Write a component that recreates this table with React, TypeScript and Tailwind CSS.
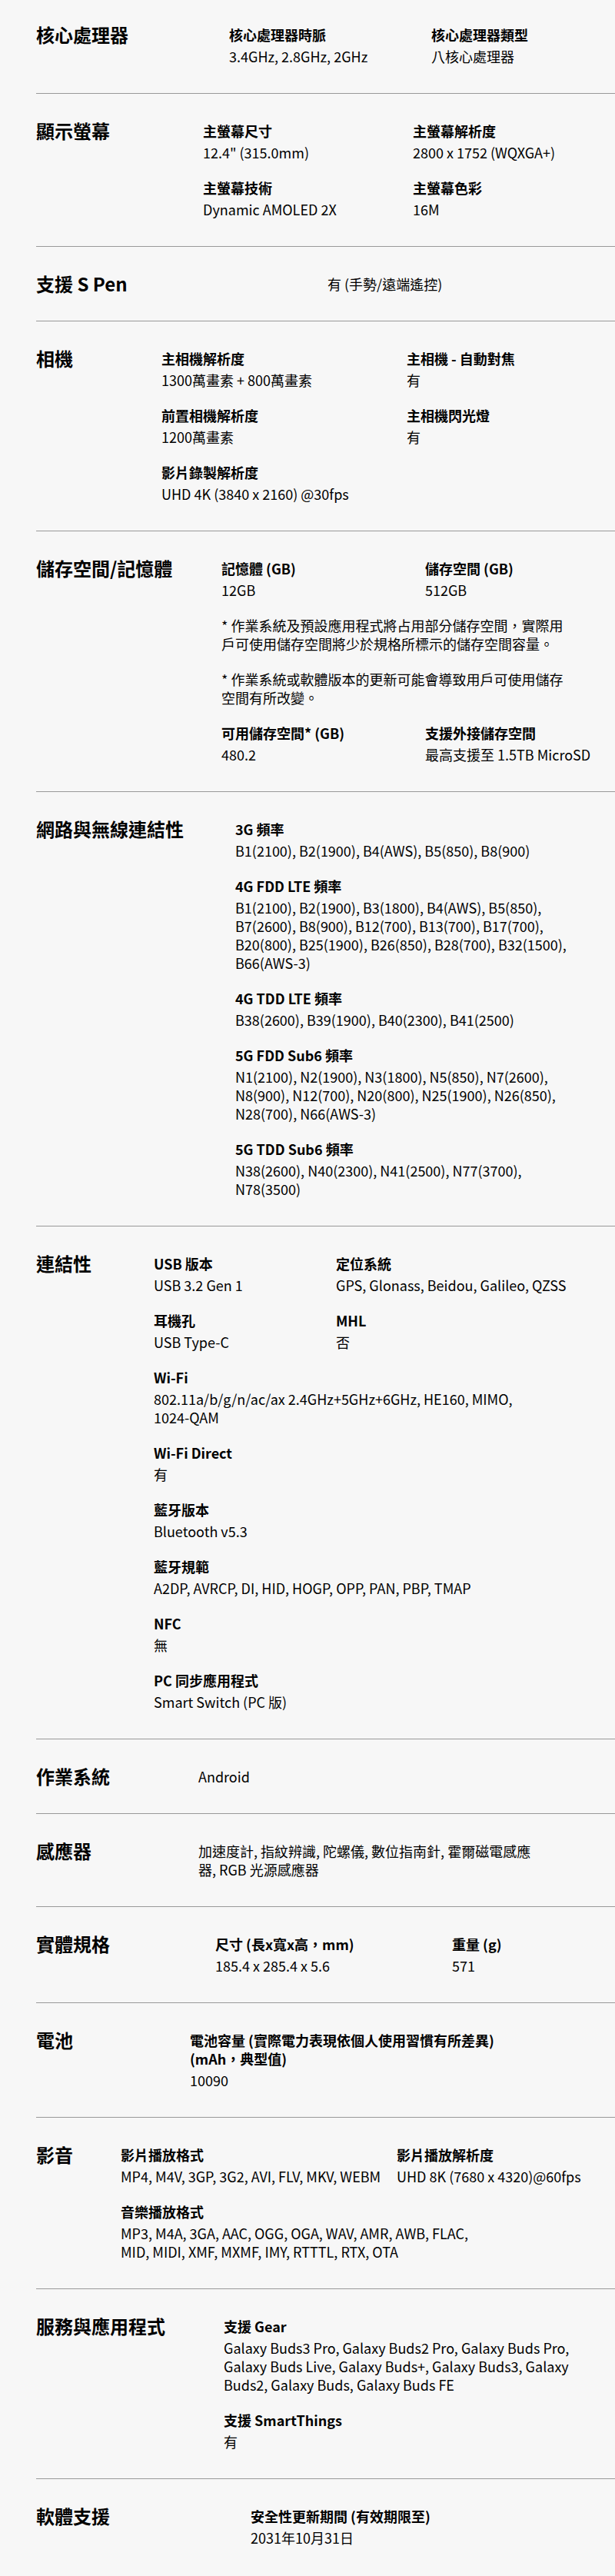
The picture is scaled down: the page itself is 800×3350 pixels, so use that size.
type Item = {
  label?: string
  value: string
  full?: boolean
  max?: string
}

type Section = {
  title: string
  head: string
  body: string
  items: Item[]
}

const sections: Section[] = [
  {
    title: "核心處理器",
    head: "w-[251px]",
    body: "grid-cols-[263px_auto]",
    items: [
      { label: "核心處理器時脈", value: "3.4GHz, 2.8GHz, 2GHz" },
      { label: "核心處理器類型", value: "八核心處理器" },
    ],
  },
  {
    title: "顯示螢幕",
    head: "w-[217px]",
    body: "grid-cols-[273px_auto]",
    items: [
      { label: "主螢幕尺寸", value: '12.4" (315.0mm)' },
      { label: "主螢幕解析度", value: "2800 x 1752 (WQXGA+)" },
      { label: "主螢幕技術", value: "Dynamic AMOLED 2X" },
      { label: "主螢幕色彩", value: "16M" },
    ],
  },
  {
    title: "支援 S Pen",
    head: "w-[379px]",
    body: "grid-cols-1",
    items: [{ value: "有 (手勢/遠端遙控)" }],
  },
  {
    title: "相機",
    head: "w-[163px]",
    body: "grid-cols-[319px_auto]",
    items: [
      { label: "主相機解析度", value: "1300萬畫素 + 800萬畫素" },
      { label: "主相機 - 自動對焦", value: "有" },
      { label: "前置相機解析度", value: "1200萬畫素" },
      { label: "主相機閃光燈", value: "有" },
      { label: "影片錄製解析度", value: "UHD 4K (3840 x 2160) @30fps" },
    ],
  },
  {
    title: "儲存空間/記憶體",
    head: "w-[241px]",
    body: "grid-cols-[265px_auto]",
    items: [
      { label: "記憶體 (GB)", value: "12GB" },
      { label: "儲存空間 (GB)", value: "512GB" },
      {
        value: "* 作業系統及預設應用程式將占用部分儲存空間，實際用戶可使用儲存空間將少於規格所標示的儲存空間容量。",
        full: true,
        max: "max-w-[452px]",
      },
      {
        value: "* 作業系統或軟體版本的更新可能會導致用戶可使用儲存空間有所改變。",
        full: true,
        max: "max-w-[452px]",
      },
      { label: "可用儲存空間* (GB)", value: "480.2" },
      { label: "支援外接儲存空間", value: "最高支援至 1.5TB MicroSD" },
    ],
  },
  {
    title: "網路與無線連結性",
    head: "w-[259px]",
    body: "grid-cols-1 w-[436px]",
    items: [
      { label: "3G 頻率", value: "B1(2100), B2(1900), B4(AWS), B5(850), B8(900)" },
      {
        label: "4G FDD LTE 頻率",
        value:
          "B1(2100), B2(1900), B3(1800), B4(AWS), B5(850), B7(2600), B8(900), B12(700), B13(700), B17(700), B20(800), B25(1900), B26(850), B28(700), B32(1500), B66(AWS-3)",
      },
      { label: "4G TDD LTE 頻率", value: "B38(2600), B39(1900), B40(2300), B41(2500)" },
      {
        label: "5G FDD Sub6 頻率",
        value:
          "N1(2100), N2(1900), N3(1800), N5(850), N7(2600), N8(900), N12(700), N20(800), N25(1900), N26(850), N28(700), N66(AWS-3)",
      },
      { label: "5G TDD Sub6 頻率", value: "N38(2600), N40(2300), N41(2500), N77(3700), N78(3500)" },
    ],
  },
  {
    title: "連結性",
    head: "w-[153px]",
    body: "grid-cols-[237px_1fr] w-[550px]",
    items: [
      { label: "USB 版本", value: "USB 3.2 Gen 1" },
      { label: "定位系統", value: "GPS, Glonass, Beidou, Galileo, QZSS" },
      { label: "耳機孔", value: "USB Type-C" },
      { label: "MHL", value: "否" },
      {
        label: "Wi-Fi",
        value: "802.11a/b/g/n/ac/ax 2.4GHz+5GHz+6GHz, HE160, MIMO, 1024-QAM",
        full: true,
        max: "max-w-[480px]",
      },
      { label: "Wi-Fi Direct", value: "有", full: true },
      { label: "藍牙版本", value: "Bluetooth v5.3", full: true },
      { label: "藍牙規範", value: "A2DP, AVRCP, DI, HID, HOGP, OPP, PAN, PBP, TMAP", full: true },
      { label: "NFC", value: "無", full: true },
      { label: "PC 同步應用程式", value: "Smart Switch (PC 版)", full: true },
    ],
  },
  {
    title: "作業系統",
    head: "w-[211px]",
    body: "grid-cols-1",
    items: [{ value: "Android" }],
  },
  {
    title: "感應器",
    head: "w-[211px]",
    body: "grid-cols-1 w-[434px]",
    items: [{ value: "加速度計, 指紋辨識, 陀螺儀, 數位指南針, 霍爾磁電感應器, RGB 光源感應器" }],
  },
  {
    title: "實體規格",
    head: "w-[233px]",
    body: "grid-cols-[308px_auto]",
    items: [
      { label: "尺寸 (長x寬x高，mm)", value: "185.4 x 285.4 x 5.6" },
      { label: "重量 (g)", value: "571" },
    ],
  },
  {
    title: "電池",
    head: "w-[200px]",
    body: "grid-cols-1 w-[420px]",
    items: [{ label: "電池容量 (實際電力表現依個人使用習慣有所差異) (mAh，典型值)", value: "10090" }],
  },
  {
    title: "影音",
    head: "w-[110px]",
    body: "grid-cols-[359px_1fr] w-[610px]",
    items: [
      { label: "影片播放格式", value: "MP4, M4V, 3GP, 3G2, AVI, FLV, MKV, WEBM" },
      { label: "影片播放解析度", value: "UHD 8K (7680 x 4320)@60fps" },
      {
        label: "音樂播放格式",
        value: "MP3, M4A, 3GA, AAC, OGG, OGA, WAV, AMR, AWB, FLAC, MID, MIDI, XMF, MXMF, IMY, RTTTL, RTX, OTA",
        full: true,
        max: "max-w-[462px]",
      },
    ],
  },
  {
    title: "服務與應用程式",
    head: "w-[244px]",
    body: "grid-cols-1 w-[472px]",
    items: [
      {
        label: "支援 Gear",
        value:
          "Galaxy Buds3 Pro, Galaxy Buds2 Pro, Galaxy Buds Pro, Galaxy Buds Live, Galaxy Buds+, Galaxy Buds3, Galaxy Buds2, Galaxy Buds, Galaxy Buds FE",
      },
      { label: "支援 SmartThings", value: "有" },
    ],
  },
  {
    title: "軟體支援",
    head: "w-[279px]",
    body: "grid-cols-1",
    items: [{ label: "安全性更新期間 (有效期限至)", value: "2031年10月31日" }],
  },
]

function SpecItem({ item }: { item: Item }) {
  return (
    <div className={`flex flex-col gap-1 ${item.full ? "col-span-2" : ""} ${item.max ?? ""}`}>
      {item.label && <h4 className="text-[18px] font-bold leading-6">{item.label}</h4>}
      <p className="text-[18px] leading-6">{item.value}</p>
    </div>
  )
}

export default function App() {
  return (
    <div className="min-h-[3350px] bg-[#f7f7f7] text-black font-['Noto_Sans_CJK_TC',sans-serif] overflow-hidden">
      {sections.map((s, i) => (
        <section
          key={s.title}
          className={`flex ml-[47px] pb-9 ${i === 0 ? "pt-[33px]" : "pt-9"} ${
            i === sections.length - 1 ? "" : "border-b border-[#999]"
          }`}
        >
          <h3 className={`${s.head} shrink-0 text-[24px] font-bold leading-6`}>{s.title}</h3>
          <div className={`grid gap-y-[22px] ${s.body}`}>
            {s.items.map((item, j) => (
              <SpecItem key={j} item={item} />
            ))}
          </div>
        </section>
      ))}
    </div>
  )
}
